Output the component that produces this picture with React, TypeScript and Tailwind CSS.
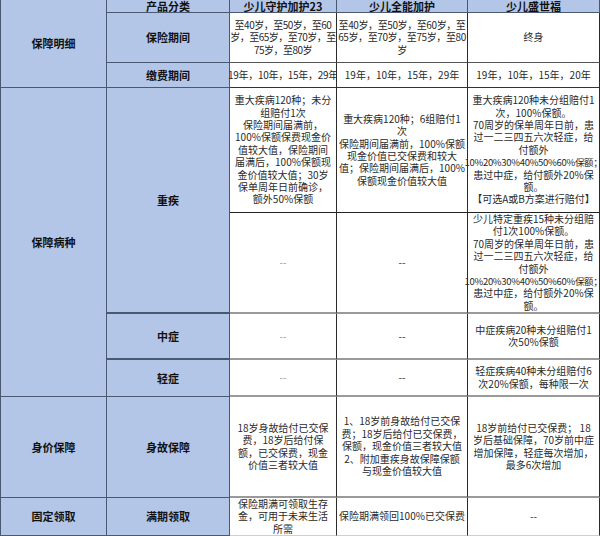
import React from 'react';

type CellProps = {
  lines: string[];
  className?: string;
  bold?: boolean;
};

// one table cell: text lines are given explicitly so wrapping matches the sheet
function Cell({ lines, className = '', bold = false }: CellProps) {
  return (
    <div
      className={`flex flex-col items-center justify-center text-center ${
        bold ? 'font-bold text-[11px] leading-[13px] text-[#111]' : 'text-[10px] leading-[12.4px] text-[#2a2a2a]'
      } ${className}`}
    >
      {lines.map((l, i) => (
        <span
          key={i}
          className={`whitespace-nowrap ${l.startsWith('10%20%') ? 'text-[9.5px] tracking-[-0.3px]' : ''}`}
        >
          {l}
        </span>
      ))}
    </div>
  );
}

const blue = 'bg-[#b4c6e7] border-[#4a5872]';
const white = 'bg-white border-r border-r-[#2b2b2b]';

export default function App() {
  return (
    <div
      className="w-[600px] h-[536px] bg-white overflow-hidden"
      style={{ fontFamily: '"Noto Sans CJK SC", "Noto Sans", sans-serif' }}
    >
      <div className="grid grid-cols-[107px_123px_107px_131px_132px] grid-rows-[13px_50px_25px_125px_101px_46px_37px_101px_38px]">
        {/* column 1 */}
        <Cell
          bold
          lines={['保障明细']}
          className={`${blue} col-start-1 row-start-1 row-span-3 border-l border-r border-b`}
        />
        <Cell
          bold
          lines={['保障病种']}
          className={`${blue} col-start-1 row-start-4 row-span-4 border-l border-r border-b`}
        />
        <Cell bold lines={['身价保障']} className={`${blue} col-start-1 row-start-8 border-l border-r border-b`} />
        <Cell bold lines={['固定领取']} className={`${blue} col-start-1 row-start-9 border-l border-r border-b`} />

        {/* column 2 */}
        <Cell bold lines={['产品分类']} className={`${blue} col-start-2 row-start-1 border-r border-b`} />
        <Cell bold lines={['保险期间']} className={`${blue} col-start-2 row-start-2 border-r border-b`} />
        <Cell bold lines={['缴费期间']} className={`${blue} col-start-2 row-start-3 border-r border-b`} />
        <Cell bold lines={['重疾']} className={`${blue} col-start-2 row-start-4 row-span-2 border-r border-b-2`} />
        <Cell bold lines={['中症']} className={`${blue} col-start-2 row-start-6 border-r border-b-2`} />
        <Cell bold lines={['轻症']} className={`${blue} col-start-2 row-start-7 border-r border-b`} />
        <Cell bold lines={['身故保障']} className={`${blue} col-start-2 row-start-8 border-r border-b`} />
        <Cell bold lines={['满期领取']} className={`${blue} col-start-2 row-start-9 border-r border-b`} />

        {/* header products */}
        <Cell bold lines={['少儿守护加护23']} className={`${blue} col-start-3 row-start-1 border-r border-b`} />
        <Cell bold lines={['少儿全能加护']} className={`${blue} col-start-4 row-start-1 border-r border-b`} />
        <Cell bold lines={['少儿盛世福']} className={`${blue} col-start-5 row-start-1 border-r border-b`} />

        {/* 保险期间 */}
        <Cell
          lines={['至40岁，至50岁，至60', '岁，至65岁，至70岁，至', '75岁，至80岁']}
          className={`${white} border-b border-b-[#555] tracking-[-0.5px]`}
        />
        <Cell
          lines={['至40岁，至50岁，至60岁，至', '65岁，至70岁，至75岁，至80', '岁']}
          className={`${white} border-b border-b-[#555] tracking-[-0.4px]`}
        />
        <Cell lines={['终身']} className={`${white} border-b border-b-[#555]`} />

        {/* 缴费期间 */}
        <Cell lines={['19年，10年，15年，29年']} className={`${white} border-b border-b-[#333] tracking-[-0.3px]`} />
        <Cell lines={['19年，10年，15年，29年']} className={`${white} border-b border-b-[#333]`} />
        <Cell lines={['19年，10年，15年，20年']} className={`${white} border-b border-b-[#333]`} />

        {/* 重疾 A */}
        <Cell
          lines={[
            '重大疾病120种；未分',
            '组赔付1次',
            '保险期间届满前，',
            '100%保额保费现金价',
            '值较大值，保险期间',
            '届满后，100%保额现',
            '金价值较大值；30岁',
            '保单周年日前确诊，',
            '额外50%保额',
          ]}
          className={`${white} border-b border-b-[#222]`}
        />
        <Cell
          lines={[
            '重大疾病120种；6组赔付1',
            '次',
            '保险期间届满前，100%保额',
            '现金价值已交保费和较大',
            '值；保险期间届满后，100%',
            '保额现金价值较大值',
          ]}
          className={`${white} border-b border-b-[#222]`}
        />
        <Cell
          lines={[
            '重大疾病120种未分组赔付1',
            '次，100%保额。',
            '70周岁的保单周年日前，患',
            '过一二三四五六次轻症，给',
            '付额外',
            '10%20%30%40%50%60%保额；',
            '患过中症，给付额外20%保',
            '额。',
            '【可选A或B方案进行赔付】',
          ]}
          className={`${white} border-b border-b-[#222]`}
        />

        {/* 重疾 B */}
        <Cell lines={['--']} className={`${white} border-b-2 border-b-[#9a9a9a] text-[#999]`} />
        <Cell lines={['--']} className={`${white} border-b-2 border-b-[#9a9a9a]`} />
        <Cell
          lines={[
            '少儿特定重疾15种未分组赔',
            '付1次100%保额。',
            '70周岁的保单周年日前，患',
            '过一二三四五六次轻症，给',
            '付额外',
            '10%20%30%40%50%60%保额；',
            '患过中症，给付额外20%保',
            '额。',
          ]}
          className={`${white} border-b-2 border-b-[#9a9a9a]`}
        />

        {/* 中症 */}
        <Cell lines={['--']} className={`${white} border-b-2 border-b-[#9a9a9a] text-[#999]`} />
        <Cell lines={['--']} className={`${white} border-b-2 border-b-[#9a9a9a]`} />
        <Cell
          lines={['中症疾病20种未分组赔付1', '次50%保额']}
          className={`${white} border-b-2 border-b-[#9a9a9a]`}
        />

        {/* 轻症 */}
        <Cell lines={['--']} className={`${white} border-b-2 border-b-[#9a9a9a] text-[#999]`} />
        <Cell lines={['--']} className={`${white} border-b-2 border-b-[#9a9a9a]`} />
        <Cell
          lines={['轻症疾病40种未分组赔付6', '次20%保额，每种限一次']}
          className={`${white} border-b-2 border-b-[#9a9a9a]`}
        />

        {/* 身故保障 */}
        <Cell
          lines={['18岁身故给付已交保', '费，18岁后给付保', '额，已交保费，现金', '价值三者较大值']}
          className={`${white} border-b-2 border-b-[#9a9a9a]`}
        />
        <Cell
          lines={[
            '1、18岁前身故给付已交保',
            '费；18岁后给付已交保费，',
            '保额，现金价值三者较大值',
            '2、附加重疾身故保障保额',
            '与现金价值较大值',
          ]}
          className={`${white} border-b-2 border-b-[#9a9a9a]`}
        />
        <Cell
          lines={['18岁前给付已交保费；  18', '岁后基础保障，70岁前中症', '增加保障，轻症每次增加，', '最多6次增加']}
          className={`${white} border-b-2 border-b-[#9a9a9a]`}
        />

        {/* 满期领取 */}
        <Cell
          lines={['保险期满可领取生存', '金，可用于未来生活', '所需']}
          className={`${white} border-b border-b-[#cfcfcf]`}
        />
        <Cell lines={['保险期满领回100%已交保费']} className={`${white} border-b border-b-[#cfcfcf]`} />
        <Cell lines={['--']} className={`${white} border-b border-b-[#cfcfcf]`} />
      </div>
    </div>
  );
}
